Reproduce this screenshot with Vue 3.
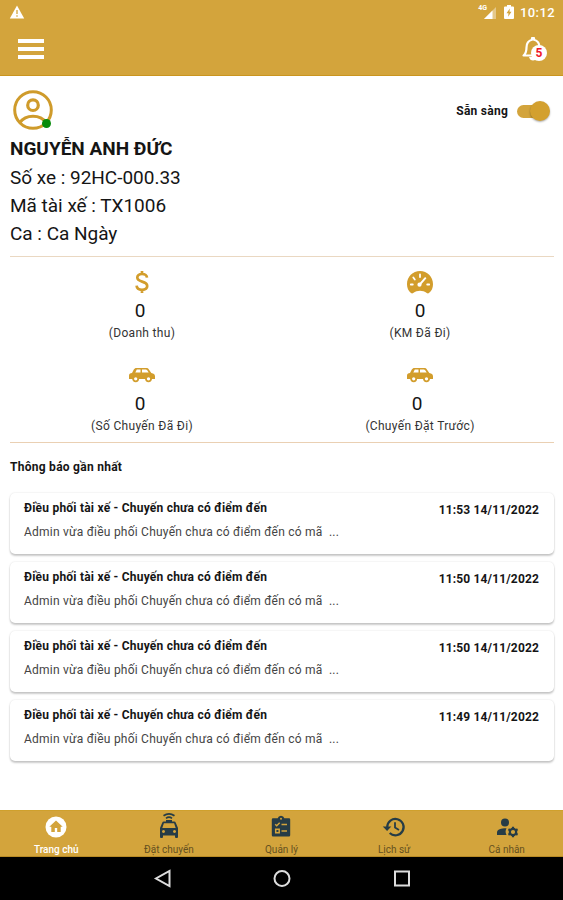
<script setup>
const profile = ['Số xe : 92HC-000.33', 'Mã tài xế : TX1006', 'Ca : Ca Ngày']
const stats = [
  { icon: 'dollar', value: 0, label: '(Doanh thu)', shift: 4 },
  { icon: 'gauge', value: 0, label: '(KM Đã Đi)', shift: 0 },
  { icon: 'car', value: 0, label: '(Số Chuyến Đã Đi)', shift: 4 },
  { icon: 'car', value: 0, label: '(Chuyến Đặt Trước)', shift: 6 },
]
const notices = ['11:53 14/11/2022', '11:50 14/11/2022', '11:50 14/11/2022', '11:49 14/11/2022']
const tabs = [
  { icon: 'home', label: 'Trang chủ' },
  { icon: 'taxi', label: 'Đặt chuyến' },
  { icon: 'clipboard', label: 'Quản lý' },
  { icon: 'history', label: 'Lịch sử' },
  { icon: 'user', label: 'Cá nhân' },
]
</script>

<template>
  <div class="screen">
    <div class="status">
      <svg class="warn" width="16" height="14" viewBox="0 0 16 14"><path d="M8 .5 15.2 13.5H.8z" fill="#fff" /><path d="M8 5v4M8 10.3v1.5" stroke="#d3a43c" stroke-width="1.3" /></svg>
      <div class="status-right">
        <span class="net">4G</span>
        <svg class="signal" width="12" height="12" viewBox="0 0 12 12"><path d="M12 0V12H0z" fill="#fff" opacity=".4" /><path d="M8.500 3.500V12H0z" fill="#fff" /></svg>
        <svg class="battery" width="10" height="14" viewBox="0 0 10 14"><path d="M3 0h4v1.500h2q1 0 1 1V13q0 1-1 1H1q-1 0-1-1V2.500q0-1 1-1h2z" fill="#fff" /><path d="M5.800 3.500 2.500 8.300h2l-.4 3.400 3.400-4.900h-2z" fill="#d3a43c" /></svg>
        <span class="clock">10:12</span>
      </div>
    </div>
    <header class="appbar">
      <div class="burger"><i /><i /><i /></div>
      <div class="bell">
        <svg width="24" height="28" viewBox="0 0 24 28"><path d="M2.500 20.500C5 18.500 5.500 17 5.500 12.500c0-4.300 2.200-7 5.500-7.800V3h2v1.700c3.300.8 5.500 3.500 5.500 7.800 0 4.500.5 6 3 8z" fill="none" stroke="#fff" stroke-width="2.200" stroke-linejoin="round" /><path d="M8 22h8q-1 3.500-4 3.500T8 22" fill="#fff" /></svg>
        <span class="count">5</span>
      </div>
    </header>

    <main>
      <section class="profile">
        <div class="profile-top">
          <div class="avatar">
            <svg width="40" height="40" viewBox="0 0 40 40" fill="none" stroke="#cf9b2b"><circle cx="20" cy="20" r="18.300" stroke-width="3" /><circle cx="20" cy="15.200" r="5.300" stroke-width="3.200" /><path d="M7 32.500C10 28 14 26.200 20 26.200S30 28 33 32.500" stroke-width="3" /></svg>
            <span class="online" />
          </div>
          <div class="ready"><span>Sẵn sàng</span><span class="toggle"><i /></span></div>
        </div>
        <h1>NGUYỄN ANH ĐỨC</h1>
        <p v-for="p in profile" :key="p">{{ p }}</p>
      </section>

      <section class="stats">
        <div v-for="s in stats" :key="s.label" class="stat">
          <div class="stat-icon">
            <svg v-if="s.icon === 'dollar'" width="16" height="24" viewBox="0 0 16 24" fill="none" stroke="#d29d2c" stroke-width="2.700"><path d="M13 7.600C12.700 5 11 4 8 4 5 4 3.300 5.400 3.300 7.600 3.300 13 13.200 10.200 13.200 16c0 2.400-2 3.800-5.200 3.800-3.300 0-5.200-1.400-5.400-4.100M8 1v3M8 19.500V23" /></svg>
            <svg v-else-if="s.icon === 'gauge'" width="28" height="24" viewBox="0 0 28 24"><path d="M5 23C2.300 20.800 1 18 1 14.300 1 6.800 6.800 1 14 1s13 5.800 13 13.300c0 3.700-1.300 6.500-4 8.700-.7.600-1.500.6-2.200 0-4-3-9.600-3-13.600 0-.7.600-1.500.6-2.200 0z" fill="#d29d2c" /><g fill="none" stroke="#fff" stroke-linecap="round"><path d="M14 4.500v2.500M7.300 7.500l1.500 2M4.800 14.500h2M21.200 14.500h2" stroke-width="1.800" /><path d="m19.300 8.200-5.200 6" stroke-width="2" /></g><circle cx="13.500" cy="14.700" r="2.100" fill="#fff" /></svg>
            <svg v-else width="28" height="18" viewBox="0 0 28 18"><path d="M8.500 2h9.700c1.200 0 2 .4 2.700 1.400L23.300 7c2.300.4 3.700 1.300 3.700 3.300V13h-3.200a3.400 3.400 0 0 1-6.500 0h-6.400a3.400 3.400 0 0 1-6.500 0H1V9.700C1 8 2 7.100 4 7l1.800-3.400C6.400 2.500 7.200 2 8.500 2z" fill="#d29d2c" /><path d="M8.800 3.600h3.700V6.500H7.300zM14 3.600h3.800c.7 0 1 .2 1.400.7l1.500 2.200H14zM2.300 9h2M24 9h2" fill="#fff" /><circle cx="7.700" cy="12.800" r="2.500" fill="#fff" stroke="#d29d2c" stroke-width="1.700" /><circle cx="20.500" cy="12.800" r="2.500" fill="#fff" stroke="#d29d2c" stroke-width="1.700" /></svg>
          </div>
          <div class="value" :style="{ paddingRight: s.shift + 'px' }">{{ s.value }}</div>
          <div class="label">{{ s.label }}</div>
        </div>
      </section>

      <section class="notices">
        <h2>Thông báo gần nhất</h2>
        <article v-for="(time, i) in notices" :key="i" class="card">
          <div class="card-head"><h3>Điều phối tài xế - Chuyến chưa có điểm đến</h3><time>{{ time }}</time></div>
          <p>Admin vừa điều phối Chuyến chưa có điểm đến có mã &nbsp;...</p>
        </article>
      </section>
    </main>

    <nav class="tabs">
      <div v-for="(t, i) in tabs" :key="t.icon" class="tab" :class="{ active: i === 0 }">
        <svg v-if="t.icon === 'home'" width="24" height="24" viewBox="0 0 24 24"><circle cx="12" cy="12" r="10.500" fill="#fff" /><path d="M12 5.600 5.300 11.700h2V17h3.500v-4h2.400v4h3.500v-5.300h2z" fill="#d3a43c" /></svg>
        <svg v-else-if="t.icon === 'taxi'" class="taxi" width="24" height="28" viewBox="0 0 24 28" fill="#263c46"><path d="M6.500 4.800Q12 .8 17.500 4.800M9 7.300q3-2.400 6 0" fill="none" stroke="#263c46" stroke-width="1.700" /><path fill-rule="evenodd" d="M9 9h6v1.500h2.200q1.200 0 1.600 1.200L21 17v9q0 1-1 1h-1q-1 0-1-1v-1.500H6V26q0 1-1 1H4q-1 0-1-1v-9l2.200-5.300q.4-1.200 1.600-1.200H9zM6.900 12.200 5.300 17h13.400l-1.600-4.800zM6.500 19a1.500 1.500 0 1 0 .01 0zm11 0a1.500 1.500 0 1 0 .01 0z" /></svg>
        <svg v-else-if="t.icon === 'clipboard'" width="24" height="24" viewBox="0 0 24 24"><path d="M4 3.300h4.700a3.400 3.400 0 0 1 6.600 0H20q1.200 0 1.200 1.200v15.800q0 1.200-1.200 1.200H4q-1.200 0-1.200-1.200V4.500Q2.800 3.300 4 3.300z" fill="#263c46" /><circle cx="12" cy="3.700" r="1" fill="#d3a43c" /><g fill="none" stroke="#d3a43c" stroke-width="1.500"><path d="M12.500 9.500H18M12.500 16H18M6.200 9.200l1.500 1.500 3-3M6.700 14.200h3.500v3.500H6.700z" /></g></svg>
        <svg v-else-if="t.icon === 'history'" width="24" height="24" viewBox="0 0 24 24"><path d="M5.200 12a8.200 8.200 0 1 1 2.500 6" fill="none" stroke="#263c46" stroke-width="2.200" /><path d="M.8 11.500h8.500L5.100 16z" fill="#263c46" /><path d="M13 7.300v5.200l4 2.500" fill="none" stroke="#263c46" stroke-width="1.800" /></svg>
        <svg v-else width="24" height="24" viewBox="0 0 24 24" fill="#263c46"><circle cx="10" cy="7.500" r="4" /><path d="M2 20v-2.500c0-3 4.500-4.300 9.500-4.200q-1.800 3.500 0 6.700z" /><circle cx="18" cy="17" r="3.200" fill="none" stroke="#263c46" stroke-width="2.200" /><path d="M18 11.700v2.500M18 19.800v2.500M13.400 14.300l2.200 1.300M20.400 18.400l2.200 1.300M13.400 19.700l2.200-1.300M20.400 15.600l2.200-1.300" stroke="#263c46" stroke-width="2.200" /></svg>
        <span>{{ t.label }}</span>
      </div>
    </nav>
    <div class="system">
      <svg width="18" height="20" viewBox="0 0 18 20"><path d="M16.500 2v15L3 9.500z" /></svg>
      <svg width="18" height="20" viewBox="0 0 18 20"><circle cx="9" cy="9.500" r="7.500" /></svg>
      <svg width="18" height="20" viewBox="0 0 18 20"><path d="M2 2.500h14v14H2z" /></svg>
    </div>
  </div>
</template>

<style>
body { margin: 0; background: #fff; }
</style>
<style scoped>
* { box-sizing: border-box; }
h1, h2, h3, p { margin: 0; }
svg { display: block; }
.screen { width: 563px; height: 900px; display: flex; flex-direction: column; font-family: Roboto, sans-serif; color: #151515; background: #fff; overflow: hidden; }
.status { height: 24px; flex: none; background: #d3a43c; display: flex; justify-content: space-between; align-items: center; padding: 0 8px 0 9px; }
.status-right { display: flex; align-items: center; height: 24px; color: #fff; }
.net { font-size: 7px; font-weight: 700; line-height: 8px; align-self: flex-start; margin-top: 4px; }
.signal { margin-left: -3px; margin-top: 2px; }
.battery { margin-left: 8px; margin-right: 6px; }
.clock { font-size: 13px; font-weight: 500; letter-spacing: .4px; }
.appbar { height: 52px; flex: none; background: #d3a43c; border-bottom: 1px solid #ca951f; display: flex; justify-content: space-between; align-items: center; padding: 0 18px 1px; }
.burger { width: 26px; display: flex; flex-direction: column; gap: 3.500px; }
.burger i { height: 4.500px; background: #fff; }
.bell { position: relative; }
.count { position: absolute; right: -2px; top: 10px; width: 16px; height: 16px; border-radius: 50%; background: #fff; color: #f0182a; font-size: 12px; font-weight: 700; line-height: 16px; text-align: center; }
main { flex: 1; padding: 0 9px 0 10px; }
.profile { height: 181px; padding-top: 14px; border-bottom: 1px solid #ead8c2; }
.profile-top { height: 45px; display: flex; justify-content: space-between; padding: 0 4px 0 3px; }
.avatar { position: relative; width: 40px; height: 40px; }
.online { position: absolute; left: 29px; top: 29px; width: 9px; height: 9px; border-radius: 50%; background: #078b0b; }
.ready { height: 42px; display: flex; align-items: center; gap: 9px; font-size: 12px; font-weight: 700; letter-spacing: .25px; }
.toggle { position: relative; width: 33px; height: 20px; display: flex; align-items: center; justify-content: flex-end; }
.toggle::before { content: ''; position: absolute; left: 0; top: 4px; width: 24px; height: 13px; border-radius: 7px; background: #d3a43c; }
.toggle i { position: relative; width: 20px; height: 20px; border-radius: 50%; background: #d3a02f; box-shadow: 0 1px 2px #0005; }
h1 { font-size: 19px; font-weight: 700; line-height: 28px; margin-bottom: 1px; }
.profile p { font-size: 19px; line-height: 28px; letter-spacing: -.02px; }
.stats { height: 186px; margin: 0 -5px 0 -7px; padding-top: 12px; display: grid; grid-template-columns: 278px 278px; grid-auto-rows: 93px; position: relative; }
.stats::after { content: ''; position: absolute; left: 7px; right: 5px; bottom: 0; height: 1px; background: #ead0b3; }
.stat { display: flex; flex-direction: column; align-items: center; }
.stat-icon { height: 26px; display: flex; align-items: center; }
.value { font-size: 19px; line-height: 30px; margin-top: 1px; }
.label { font-size: 12px; line-height: 16px; letter-spacing: .32px; color: #333; margin-top: -1px; }
.notices { padding-top: 15px; }
h2 { font-size: 12px; font-weight: 700; line-height: 18px; letter-spacing: .27px; margin-bottom: 17px; }
.card { height: 61px; margin-bottom: 8px; padding: 7px 15px 0 14px; border-radius: 5px; background: #fff; box-shadow: 0 2px 2px #0003, 0 0 2px #0002; }
.card-head { display: flex; justify-content: space-between; line-height: 16px; }
h3 { font-size: 12px; font-weight: 700; letter-spacing: .22px; }
time { font-size: 12px; font-weight: 700; padding-top: 2px; letter-spacing: .15px; }
.card p { font-size: 12px; line-height: 16px; margin-top: 6px; letter-spacing: .23px; color: #444; }
.tabs { height: 47px; flex: none; background: #d3a43c; border-top: 1px solid #cfa02c; border-bottom: 1px solid #b88a25; display: grid; grid-template-columns: repeat(5, 1fr); }
.tab { display: flex; flex-direction: column; align-items: center; padding-top: 4px; color: #65501f; font-size: 10px; }
.tab span { line-height: 14px; margin-top: 4px; white-space: nowrap; }
.tab .taxi { margin-top: -4px; }
.active { color: #fff; font-weight: 500; }
.system { height: 43px; flex: none; background: #000; display: flex; justify-content: center; align-items: center; gap: 102px; }
.system svg { fill: none; stroke: #ddd; stroke-width: 2; }
</style>
